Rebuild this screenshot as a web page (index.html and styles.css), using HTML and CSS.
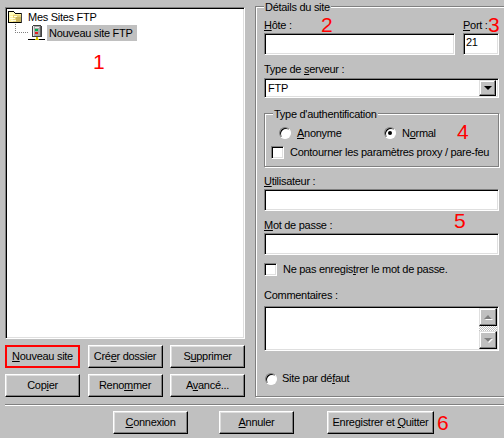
FILE: index.html
```html
<!DOCTYPE html>
<html lang="fr">
<head>
<meta charset="utf-8">
<title>Gestionnaire de sites</title>
<link rel="stylesheet" href="styles.css">
</head>
<body>
<div class="window">
  <div class="main">
    <div class="left">
      <div class="tree">
        <div class="node">
          <svg class="ico" width="16" height="14" viewBox="0 0 16 14" shape-rendering="crispEdges"><path d="M1 1h6v1h1v1h7v10H1z" fill="#000"/><path d="M2 2h5v1h1v1h6v2H2z" fill="#fffdc0"/><path d="M2 5h4V4h9v1h-1v7H2z" fill="#fff3a0"/><path d="M6 5h8v7H6z" fill="#e6d47c"/><path d="M9 7h5v5H9z" fill="#c9b45e"/><path d="M3 6h3v1H3zM3 8h5v1H3zM4 10h5v1H4zM7 6h3v1H7z" fill="#fffde0"/><path d="M14 3h1v10h-1z" fill="#404040"/></svg>
          <span class="node-text">Mes Sites FTP</span>
        </div>
        <div class="node child">
          <span class="dots"></span>
          <svg class="ico" width="17" height="16" viewBox="0 0 17 16" shape-rendering="crispEdges"><path d="M5 0h8v1h1v11H4V1h1z" fill="#404040"/><path d="M5 1h7v10H5z" fill="#a8a8a8"/><path d="M5 1h1v10H5z" fill="#e8e8e8"/><path d="M7 2h4v1H7z" fill="#f0f0f0"/><path d="M7 4h3v2H7z" fill="#00b050"/><path d="M7 7h3v2H7z" fill="#e02020"/><path d="M12 1h1v10h-1z" fill="#606060"/><path d="M8 12h2v2H8z" fill="#d0c000"/><path d="M0 14h17v1H0z" fill="#000"/><path d="M7 14h4v1H7z" fill="#d0c000"/></svg>
          <span class="node-text selected">Nouveau site FTP</span>
        </div>
      </div>
      <div class="btn-grid">
        <button class="btn focus"><u>N</u>ouveau site</button>
        <button class="btn">Cré<u>e</u>r dossier</button>
        <button class="btn">S<u>u</u>pprimer</button>
        <button class="btn">Cop<u>i</u>er</button>
        <button class="btn">Reno<u>m</u>mer</button>
        <button class="btn">A<u>v</u>ancé...</button>
      </div>
    </div>
    <div class="group details">
      <div class="group-title">Détails du site</div>
      <div class="host-row">
        <div class="col grow">
          <label class="lbl"><u>H</u>ôte :</label>
          <div class="input tall"></div>
        </div>
        <div class="col port">
          <label class="lbl"><u>P</u>ort :</label>
          <div class="input tall">21</div>
        </div>
      </div>
      <label class="lbl server-lbl">Type de <u>s</u>erveur :</label>
      <div class="input combo">
        <span class="combo-val">FTP</span>
        <span class="combo-btn"><i class="arrow"></i></span>
      </div>
      <div class="group auth">
        <div class="group-title">Type d'authentification</div>
        <div class="radios">
          <span class="opt anon"><span class="radio"></span><span><u>A</u>nonyme</span></span>
          <span class="opt"><span class="radio on"></span><span>N<u>o</u>rmal</span></span>
        </div>
        <div class="opt bypass"><span class="check"></span><span>Contourner les paramètres proxy / pare-feu</span></div>
      </div>
      <label class="lbl user-lbl"><u>U</u>tilisateur :</label>
      <div class="input tall"></div>
      <label class="lbl pass-lbl"><u>M</u>ot de passe :</label>
      <div class="input tall"></div>
      <div class="opt nosave"><span class="check"></span><span>Ne pas enregis<u>t</u>rer le mot de passe.</span></div>
      <label class="lbl comment-lbl">Commentaires :</label>
      <div class="input area">
        <div class="scroll">
          <span class="sbtn"><i class="arrow up"></i></span>
          <span class="strack"></span>
          <span class="sbtn"><i class="arrow"></i></span>
        </div>
      </div>
      <div class="opt default"><span class="radio"></span><span>Site par dé<u>f</u>aut</span></div>
    </div>
  </div>
  <div class="sep"></div>
  <div class="footer">
    <button class="btn"><u>C</u>onnexion</button>
    <button class="btn cancel"><u>A</u>nnuler</button>
    <button class="btn save">Enregistrer et <u>Q</u>uitter</button>
  </div>
  <span class="mark m1">1</span>
  <span class="mark m2">2</span>
  <span class="mark m3">3</span>
  <span class="mark m4">4</span>
  <span class="mark m5">5</span>
  <span class="mark m6">6</span>
</div>
</body>
</html>
```
FILE: styles.css
```css
* { box-sizing: border-box; }
html, body { margin: 0; padding: 0; background: #c0c0c0; }
.window {
  position: relative;
  width: 504px;
  height: 438px;
  overflow: hidden;
  background: #c0c0c0;
  color: #000;
  font: 11px/13px "Liberation Sans", Arial, sans-serif;
  letter-spacing: -0.28px;
}
u { text-underline-offset: 1px; }
.main { display: flex; gap: 10px; padding: 6px 0 0 5px; height: 398px; }
.left { width: 240px; flex: none; padding-top: 1px; }
.tree {
  height: 332px;
  background: #fff;
  border: 1px solid #808080;
  border-right-color: #fff;
  border-bottom-color: #fff;
  box-shadow: inset 1px 1px 0 #000, inset -1px -1px 0 #dfdfdf;
  padding: 1px;
}
.node { display: flex; align-items: center; height: 16px; }
.node .ico { flex: none; }
.node-text { padding: 0 2px; margin-left: 3px; line-height: 16px; white-space: nowrap; }
.child { padding-left: 8px; }
.dots { width: 13px; height: 9px; margin-top: -9px; flex: none; border-left: 1px dotted #808080; border-bottom: 1px dotted #808080; }
.selected { background: #c0c0c0; margin-left: 2px; width: 90px; }
.child .node-text { height: 16px; }
.btn-grid { display: grid; grid-template-columns: 75px 75px 75px; column-gap: 7.5px; row-gap: 6px; margin-top: 6px; }
.btn {
  height: 23px;
  padding: 0;
  background: #c0c0c0;
  color: #000;
  font: inherit;
  letter-spacing: inherit;
  border: 1px solid;
  border-color: #fff #000 #000 #fff;
  box-shadow: inset -1px -1px 0 #808080, inset 1px 1px 0 #dfdfdf;
  white-space: nowrap;
}
.btn.focus { outline: 2px solid #f00; outline-offset: -2px; }
.group {
  border: 1px solid #808080;
  box-shadow: 1px 1px 0 #fff, inset 1px 1px 0 #fff;
}
.group-title {
  width: fit-content;
  background: #c0c0c0;
  padding: 0 1px;
  margin-top: -6px;
  position: relative;
}
.details { width: 252px; height: 391px; padding: 0 0 0 8px; flex: none; }
.details > *:not(.group-title) { width: 235px; flex: none; }
.host-row { display: flex; gap: 8px; margin-top: 5px; }
.col { display: flex; flex-direction: column; }
.grow { flex: 1; }
.port { width: 36px; }
.lbl { display: block; height: 14px; white-space: nowrap; }
.input {
  background: #fff;
  border: 1px solid #808080;
  border-right-color: #fff;
  border-bottom-color: #fff;
  box-shadow: inset 1px 1px 0 #000, inset -1px -1px 0 #dfdfdf;
  padding: 3px;
}
.port .input { padding: 2px; }
.tall { height: 22px; }
.server-lbl { margin-top: 8px; height: 15px; }
.combo { height: 20px; display: flex; align-items: center; padding: 2px; justify-content: space-between; }
.combo-val { padding-left: 1px; }
.combo-btn, .sbtn {
  background: #c0c0c0;
  border: 1px solid;
  border-color: #dfdfdf #000 #000 #dfdfdf;
  box-shadow: inset -1px -1px 0 #808080, inset 1px 1px 0 #fff;
  display: flex; align-items: center; justify-content: center;
  flex: none;
}
.combo-btn { width: 17px; height: 16px; }
.arrow { display: block; width: 0; height: 0; border: 4px solid transparent; border-top-color: #000; border-bottom: 0; }
.arrow.up { border-top: 0; border-bottom: 4px solid #808080; }
.sbtn .arrow { filter: drop-shadow(1px 1px 0 #fff); }
.sbtn .arrow:not(.up) { border-top-color: #808080; }
.auth { margin-top: 15px; height: 54px; padding-left: 6px; }
.auth .group-title { margin-left: 2px; }
.radios { display: flex; margin-top: 4px; padding-left: 8px; height: 16px; }
.opt { display: flex; align-items: center; gap: 6px; white-space: nowrap; }
.anon { width: 105px; }
.radio {
  width: 12px; height: 12px; flex: none; border-radius: 50%;
  background: #fff;
  border: 1px solid;
  border-color: #808080 #fff #fff #808080;
  box-shadow: inset 1px 1px 0 #000;
  position: relative;
}
.radio.on::after { content: ""; position: absolute; left: 3px; top: 3px; width: 4px; height: 4px; border-radius: 50%; background: #000; }
.check {
  width: 13px; height: 13px; flex: none;
  background: #fff;
  border: 1px solid;
  border-color: #808080 #fff #fff #808080;
  box-shadow: inset 1px 1px 0 #000, inset -1px -1px 0 #dfdfdf;
}
.bypass { margin-top: 3px; height: 16px; }
.user-lbl { margin-top: 8px; height: 14px; }
.pass-lbl { margin-top: 8px; height: 14px; }
.nosave { margin-top: 7px; height: 14px; }
.comment-lbl { margin-top: 13px; height: 17px; }
.area { height: 45px; padding: 1px 1px 1px 1px; display: flex; justify-content: flex-end; }
.scroll { width: 18px; display: flex; flex-direction: column; flex: none; }
.sbtn { height: 18px; }
.strack { flex: 1; background: repeating-conic-gradient(#fff 0 25%, #c0c0c0 0 50%) 0 0 / 2px 2px; }
.default { margin-top: 21px; padding-left: 1px; gap: 5px; }
.sep { height: 2px; margin: 6px 0 0 5px; background: #808080; border-bottom: 1px solid #fff; }
.footer { display: flex; padding: 5px 0 0 113px; }
.footer .btn { width: 75px; height: 23px; }
.footer .cancel { margin-left: 31px; }
.footer .save { margin-left: 33px; width: 107px; }
.mark { position: absolute; color: #f00; font-size: 21px; line-height: 20px; letter-spacing: 0; }
.m1 { left: 93px; top: 52px; }
.m2 { left: 321px; top: 15px; }
.m3 { left: 488px; top: 15px; }
.m4 { left: 457px; top: 122px; }
.m5 { left: 454px; top: 211px; }
.m6 { left: 437px; top: 413px; }
```
